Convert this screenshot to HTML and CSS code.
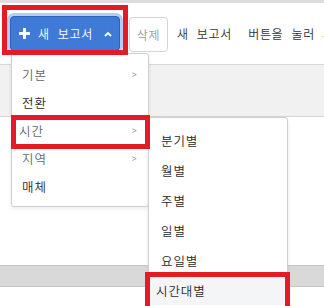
FILE: index.html
```html
<!DOCTYPE html>
<html lang="ko">
<head>
<meta charset="utf-8">
<link rel="stylesheet" href="styles.css">
</head>
<body>
<div class="page">
  <div class="top-strip"></div>
  <div class="toolbar">
    <button class="btn btn-primary">
      <svg class="plus" width="11" height="11" viewBox="0 0 11 11"><path d="M5.5 1v9M1 5.5h9" stroke="#fff" stroke-width="3" stroke-linecap="round"/></svg>
      <span class="btn-label">새 보고서</span>
      <svg class="caret" width="8" height="6" viewBox="0 0 8 6"><path d="M1 5l3-3 3 3" fill="none" stroke="#fff" stroke-width="1.8"/></svg>
    </button>
    <button class="btn btn-default">삭제</button>
    <span class="hint">새 보고서&nbsp; 버튼을 눌러 사용하세요</span>
  </div>
  <div class="grid">
    <div class="grid-head"></div>
    <div class="grid-body"></div>
    <div class="grid-foot"></div>
  </div>

  <ul class="menu menu-main">
    <li class="menu-item has-sub">기본<span class="chev">&gt;</span></li>
    <li class="menu-item">전환</li>
    <li class="menu-item has-sub shifted">시간<span class="chev">&gt;</span></li>
    <li class="menu-item has-sub">지역<span class="chev">&gt;</span></li>
    <li class="menu-item">매체</li>
  </ul>

  <ul class="menu menu-sub">
    <li class="menu-item">분기별</li>
    <li class="menu-item">월별</li>
    <li class="menu-item">주별</li>
    <li class="menu-item">일별</li>
    <li class="menu-item">요일별</li>
    <li class="menu-item active shifted2">시간대별</li>
  </ul>

  <div class="mark mark-btn"></div>
  <div class="mark mark-time"></div>
  <div class="mark mark-hour"></div>
</div>
</body>
</html>
```

FILE: styles.css
```css
* { box-sizing: border-box; }
html, body { margin: 0; padding: 0; }
body {
  width: 324px;
  height: 306px;
  overflow: hidden;
  background: #fff;
  font-family: "Noto Sans CJK KR", "Noto Sans", sans-serif;
  color: #333;
}
.page { position: relative; width: 324px; height: 306px; overflow: hidden; }

.top-strip { height: 3px; background: #dedede; }

.toolbar {
  display: flex;
  align-items: center;
  padding: 12px 0 12px 10px;
  white-space: nowrap;
}
.btn {
  flex-shrink: 0;
  font-family: inherit;
  height: 35px;
  border-radius: 4px;
  font-size: 12px;
  font-weight: 350;
  letter-spacing: 0.7px;
  padding: 0;
  display: flex;
  align-items: center;
}
.btn-primary {
  width: 110px;
  background: #3f7bd6;
  border: 1px solid #2d62b8;
  color: #fff;
  box-shadow: 0 0 0 3px #b5cdf1;
  padding-left: 8px;
}
.plus { margin-right: 8px; }
.btn-label { word-spacing: 4px; }
.caret { margin-left: 11px; }
.btn-default {
  margin-left: 9px;
  width: 39px;
  justify-content: center;
  background: #fff;
  border: 1px solid #d4d4d4;
  color: #9a9a9a;
  margin-top: 2px;
}
.hint {
  flex-shrink: 0;
  margin-left: 9px;
  font-size: 12px;
  font-weight: 350;
  letter-spacing: 0.7px;
  word-spacing: 4px;
  color: #333;
}

.grid-head {
  height: 53px;
  background: #f1f1f1;
  border-top: 1px solid #d6d6d6;
  border-bottom: 1px solid #d6d6d6;
}
.grid-body { height: 148px; background: #fff; }
.grid-foot {
  height: 22px;
  background: #d9d9d9;
  border-top: 1px solid #c6c6c6;
  border-bottom: 1px solid #c6c6c6;
}

.menu {
  position: absolute;
  margin: 0;
  list-style: none;
  background: #fff;
  border: 1px solid #cfcfcf;
  border-radius: 3px;
  box-shadow: 0 2px 4px rgba(0,0,0,0.08);
}
.menu-main { left: 11px; top: 53px; width: 138px; padding: 6px 0; }
.menu-sub { left: 148px; top: 117px; width: 140px; padding: 7px 0; }
.menu-item {
  display: flex;
  align-items: center;
  font-size: 12.5px;
  font-weight: 350;
  letter-spacing: 0.9px;
  color: #2a2a2a;
}
.menu-main .menu-item { height: 28px; padding-left: 10px; padding-right: 10px; }
.menu-sub .menu-item { height: 30px; padding-left: 12px; }
.menu-item.has-sub { color: #666; }
.chev {
  margin-left: auto;
  color: #999;
  font-size: 11px;
  transform: scaleX(0.8);
}
.shifted { padding-left: 7px !important; }
.active { background: #f4f5f7; }
.shifted2 { padding-left: 7px !important; }

.mark {
  position: absolute;
  border: 5px solid #e21b26;
  pointer-events: none;
}
.mark-btn { left: 2px; top: 5px; width: 126px; height: 50px; }
.mark-time { left: 11px; top: 115px; width: 139px; height: 34px; }
.mark-hour { left: 145px; top: 272px; width: 145px; height: 40px; }
```
